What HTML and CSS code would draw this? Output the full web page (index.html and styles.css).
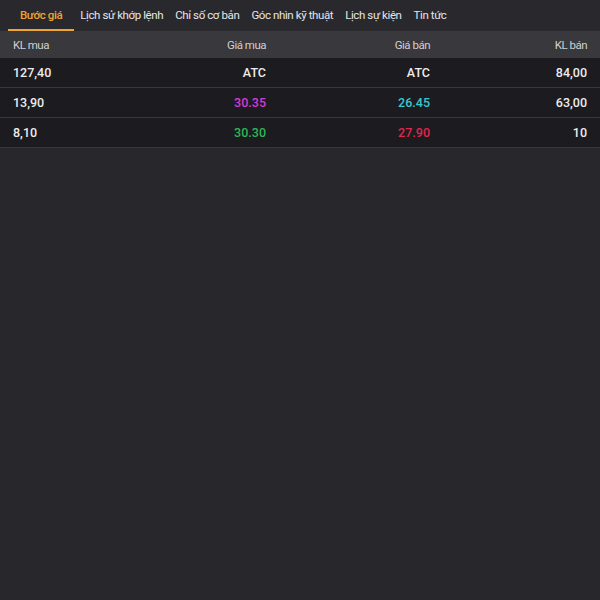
FILE: index.html
```html
<!DOCTYPE html>
<html lang="vi">
<head>
  <meta charset="UTF-8">
  <meta name="viewport" content="width=device-width, initial-scale=1.0">
  <title>Bước giá</title>
  <link rel="stylesheet" href="styles.css">
</head>

<body>
  <div class="tabs">
    <div class="tab active">Bước giá</div>
    <div class="tab">Lịch sử khớp lệnh</div>
    <div class="tab">Chỉ số cơ bản</div>
    <div class="tab">Góc nhìn kỹ thuật</div>
    <div class="tab">Lịch sự kiện</div>
    <div class="tab">Tin tức</div>
  </div>

  <div class="table">
    <div class="row head">
      <div class="cell left">KL mua</div>
      <div class="cell">Giá mua</div>
      <div class="cell">Giá bán</div>
      <div class="cell">KL bán</div>
    </div>
    <div class="row">
      <div class="cell left">127,40</div>
      <div class="cell">ATC</div>
      <div class="cell">ATC</div>
      <div class="cell">84,00</div>
    </div>
    <div class="row">
      <div class="cell left">13,90</div>
      <div class="cell ceil">30.35</div>
      <div class="cell floor">26.45</div>
      <div class="cell">63,00</div>
    </div>
    <div class="row">
      <div class="cell left">8,10</div>
      <div class="cell up">30.30</div>
      <div class="cell down">27.90</div>
      <div class="cell">10</div>
    </div>
  </div>
</body>

</html>
```

FILE: styles.css
```css
body {
  margin: 0;
  background-color: #28272c;
  font-family: Roboto, "Noto Sans", sans-serif;
  font-size: 11.5px;
  color: #ececec;
}

.tabs {
  display: flex;
  height: 31px;
  padding-left: 8px;
  background-color: #29282d;
  letter-spacing: -0.4px;
}

.tab {
  display: flex;
  align-items: center;
  padding: 1px 6px 0;
  color: #e6e6e6;
  border-bottom: 2px solid transparent;
  box-sizing: border-box;
}

.tab.active {
  padding: 1px 12px 0;
  color: #f0a531;
  font-weight: 500;
  border-bottom-color: #f0a531;
}

.row {
  display: grid;
  grid-template-columns: 1fr 100px 164px 157px;
  align-items: center;
  height: 29px;
  padding: 0 13px;
  background-color: #1c1b1f;
  border-bottom: 1px solid #38373c;
  font-size: 12.5px;
  font-weight: 500;
}

.row.head {
  height: 27px;
  border-bottom: none;
  background-color: #39383d;
  color: #d0d0d0;
  font-size: 11.5px;
  font-weight: 400;
  letter-spacing: -0.5px;
}

.cell {
  text-align: right;
}

.cell.left {
  text-align: left;
}

.ceil {
  color: #d53ad6;
}

.floor {
  color: #3cc6cf;
}

.up {
  color: #2fb557;
}

.down {
  color: #e0264a;
}
```
